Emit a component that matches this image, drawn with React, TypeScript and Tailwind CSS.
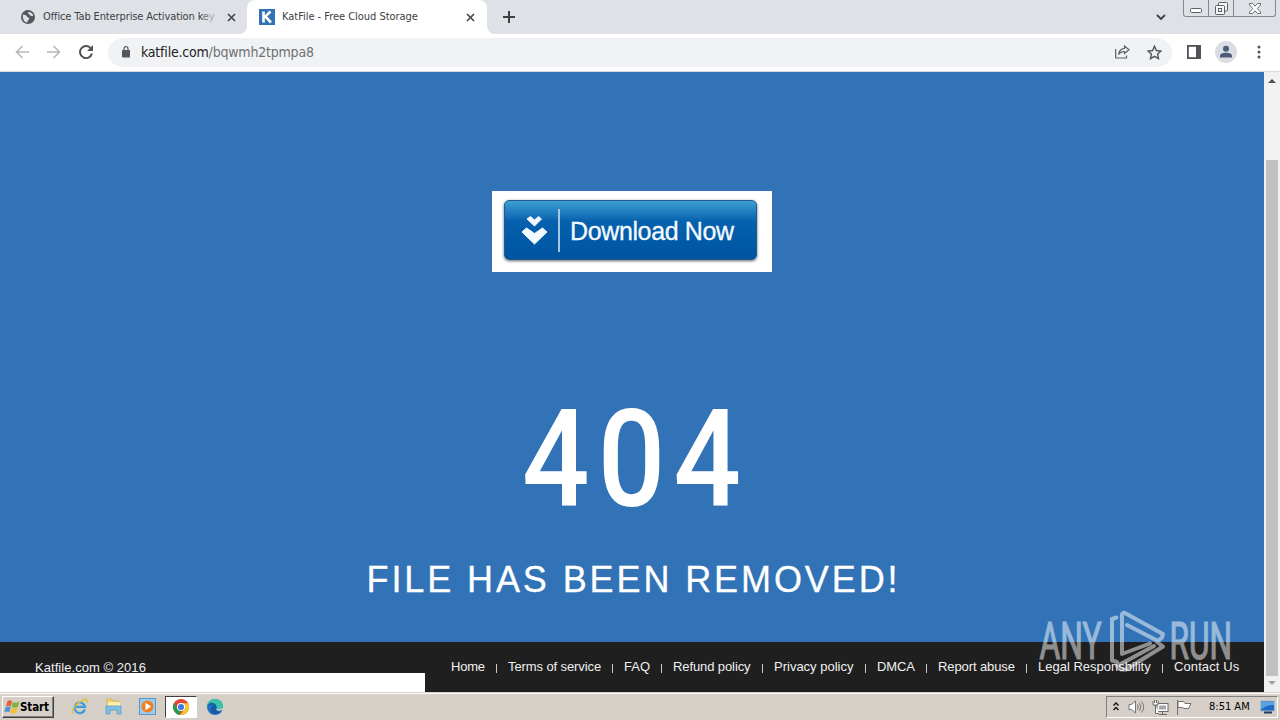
import React from "react";

const FOOTER_LINKS = [
  { label: "Home", w: "w-[34px]", ls: "tracking-[-0.2px]" },
  { label: "Terms of service", w: "w-[93px]", ls: "tracking-[-0.1px]" },
  { label: "FAQ", w: "w-[26px]", ls: "tracking-[0px]" },
  { label: "Refund policy", w: "w-[78px]", ls: "tracking-[-0.1px]" },
  { label: "Privacy policy", w: "w-[80px]", ls: "tracking-[0px]" },
  { label: "DMCA", w: "w-[38px]", ls: "tracking-[-0.1px]" },
  { label: "Report abuse", w: "w-[77px]", ls: "tracking-[-0.1px]" },
  { label: "Legal Responsbility", w: "w-[113px]", ls: "tracking-[0px]" },
  { label: "Contact Us", w: "w-[65px]", ls: "tracking-[0.1px]" },
];

function Cross() {
  return (
    <svg width="9" height="9" viewBox="0 0 9 9" className="shrink-0">
      <path d="M1 1L8 8M8 1L1 8" stroke="#45484c" strokeWidth="1.7" />
    </svg>
  );
}

function TabStrip() {
  return (
    <div className="flex h-[34px] bg-white text-[11px] text-[#3c4043]">
      <div className="flex h-[34px] w-[247px] items-center rounded-br-lg bg-[#dee1e6] pl-[21px]">
        <svg width="14" height="14" viewBox="0 0 14 14" className="shrink-0">
          <circle cx="7" cy="7" r="7" fill="#54585d" />
          <path d="M2 4.5C3.5 5 5 4.5 5.5 6C6 7.5 8 7 8.2 8.5C8.3 10 6.5 10 6.3 12.4C3 12 1.4 9 2 4.500Z" fill="#dee1e6" />
          <path d="M7 2C9 1.500 11.500 3 12.300 5.500C11 6.500 9.500 6 9 5C8 4.500 7 3.500 7 2Z" fill="#dee1e6" />
        </svg>
        <span className="ml-[8px] w-[176px] whitespace-nowrap pt-[1px] tracking-[-0.12px]">
          Office Tab Enterprise Activation k<span className="text-[#74787e]">e</span><span className="text-[#a5a9ae]">y</span>
        </span>
        <span className="ml-[8px] flex"><Cross /></span>
      </div>
      <div className="w-[240px] bg-[#dee1e6]">
        <div className="flex h-[34px] items-center rounded-t-lg bg-white pl-[12px]">
          <svg width="16" height="16" viewBox="0 0 16 16" className="shrink-0">
            <rect width="16" height="16" fill="#3173b6" />
            <path d="M4.500 2.500V13.500M11.500 2.500L6.300 7.500L12 13.500" stroke="#fff" strokeWidth="2.600" fill="none" />
          </svg>
          <span className="ml-[7px] w-[177px] whitespace-nowrap pt-[1px] tracking-[-0.03px]">KatFile - Free Cloud Storage</span>
          <span className="ml-[7px] flex"><Cross /></span>
        </div>
      </div>
      <div className="flex flex-1 items-center rounded-bl-lg bg-[#dee1e6] pl-[16px]">
        <svg width="12" height="12" viewBox="0 0 12 12">
          <path d="M6 0V12M0 6H12" stroke="#3c4043" strokeWidth="2" />
        </svg>
        <svg className="ml-auto" width="10" height="7" viewBox="0 0 10 7">
          <path d="M1 1L5 5L9 1" fill="none" stroke="#3c4043" strokeWidth="1.800" />
        </svg>
        <div className="ml-[17px] mr-[4px] flex h-[17px] w-[93px] self-start rounded-b-[3px] border border-t-0 border-[#85888e]">
          <div className="flex w-[25px] items-end justify-center border-r border-[#85888e] pb-[3px]">
            <svg width="12" height="5" viewBox="0 0 12 5"><rect x=".5" y=".5" width="11" height="4" rx="1" fill="#fff" stroke="#5c5f65" /></svg>
          </div>
          <div className="flex w-[25px] items-end justify-center border-r border-[#85888e] pb-[1px]">
            <svg width="13" height="13" viewBox="0 0 13 13" fill="#f4f5f7" stroke="#5c5f65">
              <rect x="3.500" y=".5" width="9" height="8.500" rx="1" />
              <rect x=".5" y="3.500" width="9" height="9" rx="1" />
              <rect x="3.500" y="6.500" width="3" height="3" />
            </svg>
          </div>
          <div className="flex flex-1 items-end justify-center pb-[2px]">
            <svg width="12" height="11" viewBox="0 0 12 11">
              <path d="M.5.5H3.500L6 3.200L8.500.5H11.500V2L8.300 5.500L11.500 9V10.500H8.500L6 7.800L3.500 10.500H.5V9L3.700 5.500L.5 2Z" fill="#fff" stroke="#5c5f65" strokeWidth=".9" />
            </svg>
          </div>
        </div>
      </div>
    </div>
  );
}

function Toolbar() {
  return (
    <div className="flex h-[38px] items-center border-b border-[#d5dbe2] bg-white pb-[1px] pl-[15px]">
      <svg width="14" height="14" viewBox="0 0 14 14"><path d="M14 7H1.500M7.500 1L1.500 7L7.500 13" fill="none" stroke="#b5b7ba" strokeWidth="1.600" /></svg>
      <svg className="ml-[18px]" width="14" height="14" viewBox="0 0 14 14"><path d="M0 7H12.500M6.500 1L12.500 7L6.500 13" fill="none" stroke="#b5b7ba" strokeWidth="1.600" /></svg>
      <svg className="ml-[18px]" width="14" height="14" viewBox="0 0 14 14">
        <path d="M12 3.700A6 6 0 1 0 12.900 8.500" fill="none" stroke="#505357" strokeWidth="2" />
        <path d="M14 0V6H8Z" fill="#505357" />
      </svg>
      <div className="ml-[15px] flex h-[29px] w-[1064px] items-center rounded-full bg-[#f0f2f4] pl-[14px]">
        <svg width="8" height="12" viewBox="0 0 8 12"><rect y="4" width="8" height="7.500" rx="1" fill="#54575b" /><path d="M2 4.500V2.700A2 2 0 0 1 6 2.700V4.500" fill="none" stroke="#54575b" strokeWidth="1.200" /></svg>
        <span className="ml-[11px] whitespace-nowrap pt-[1px] text-[14px] tracking-[-0.2px] text-[#202124]">katfile.com<span className="text-[#6d7175]">/bqwmh2tpmpa8</span></span>
        <svg className="ml-auto" width="15" height="14" viewBox="0 0 15 14" fill="none" stroke="#5c5f63" strokeWidth="1.200">
          <path d="M.7 4V13H11.500V10.500" />
          <path d="M9.500 1L14 4.800L9.500 8.500V6.500C6.500 6.500 5 7.300 3.500 9.500C4 5.800 6 3.800 9.500 3.300Z" />
        </svg>
        <svg className="ml-[17px] mr-[10px]" width="15" height="15" viewBox="0 0 15 15"><path d="M7.500 1.300L9.400 5.500L14 6L10.600 9.100L11.500 13.600L7.500 11.300L3.500 13.600L4.400 9.100L1 6L5.600 5.500Z" fill="none" stroke="#505357" strokeWidth="1.400" /></svg>
      </div>
      <svg className="ml-[15px]" width="14" height="14" viewBox="0 0 14 14"><rect x=".9" y=".9" width="12.200" height="12.200" fill="none" stroke="#505357" strokeWidth="1.800" /><rect x="9" width="5" height="14" fill="#505357" /></svg>
      <svg className="ml-[14px]" width="22" height="22" viewBox="0 0 22 22"><circle cx="11" cy="11" r="11" fill="#dadee3" /><circle cx="11" cy="7.800" r="3" fill="#4d5a7a" /><path d="M5 16.500V15C5 12.500 8.500 11.800 11 11.800S17 12.500 17 15V16.500Z" fill="#4d5a7a" /></svg>
      <svg className="ml-[20px]" width="4" height="14" viewBox="0 0 4 14" fill="#505357"><circle cx="2" cy="2" r="1.500" /><circle cx="2" cy="7" r="1.500" /><circle cx="2" cy="12" r="1.500" /></svg>
    </div>
  );
}

function DownloadButton() {
  return (
    <div className="flex h-[81px] w-[280px] items-start bg-white pl-[12px] pt-[9px]">
      <div className="flex h-[60px] w-[253px] items-center rounded-[5px] border border-[#1c5b8c] bg-linear-to-b from-[#3c9fd3] via-[#0561ad] via-35% to-[#0054a2] pl-[16px] shadow-[0_1px_3px_#5c6670]">
        <svg width="28" height="30" viewBox="0 0 28 30" fill="#f3faff" stroke="#f3faff" strokeLinejoin="round">
          <path d="M9.500 1.500L13.500 5L17.500 1.500L20.500 4L13.500 11L6 4Z" />
          <path d="M5.500 13L13.500 18.500L21.500 13L26 17L13.500 29L1 17Z" />
        </svg>
        <div className="ml-[9px] h-[43px] w-[2px] bg-[#a4c7e4]" />
        <span className="ml-[10px] mt-[2px] whitespace-nowrap text-[25px] leading-[30px] tracking-[-0.37px] text-[#f3faff] [-webkit-text-stroke:0.3px_#f3faff]">Download Now</span>
      </div>
    </div>
  );
}

function Watermark() {
  return (
    <svg className="absolute left-[1032px] top-[532px] overflow-visible" width="206" height="74" viewBox="-4 -4 206 74" opacity=".5">
      <g fill="#fff" stroke="#fff" strokeWidth="1.200" fontFamily="Roboto, sans-serif" fontSize="51">
        <text transform="translate(3.500 51) scale(.62 1)" x="0" y="0" textLength="100" lengthAdjust="spacingAndGlyphs">ANY</text>
        <text transform="translate(133.500 51) scale(.62 1)" x="0" y="0" textLength="101" lengthAdjust="spacingAndGlyphs">RUN</text>
      </g>
      <g fill="none" stroke="#fff" strokeWidth="4" strokeLinejoin="round" strokeLinecap="round">
        <path d="M80.500 9.500L76 11V52.500L81 54" />
        <path d="M91 17L122 33L126 29.500L127 26L88 4.500L86 6V46L114 35.500" />
        <path d="M118 38L81 58L85 61.500H90L127 38.500L121 34" />
      </g>
    </svg>
  );
}

function Page() {
  return (
    <div className="relative flex h-[620px]">
      <div className="flex w-[1264px] flex-col bg-[#3173b6]">
        <div className="flex h-[570px] flex-col items-center pt-[119px] text-white">
          <DownloadButton />
          <h1 className="mt-[108px] h-[160px] scale-x-[0.88] pl-[8px] font-['Roboto'] text-[135px] leading-[160px] font-medium tracking-[9.3px]">404</h1>
          <p className="mt-[18px] whitespace-nowrap pl-[3px] text-[36px] leading-[44px] tracking-[2.9px] [-webkit-text-stroke:0.3px_#fff]">FILE HAS BEEN REMOVED!</p>
        </div>
        <footer className="flex h-[50px] bg-[#1f1f1f] text-[13px] leading-[16px] text-[#f0f0f0]">
          <span className="ml-[35px] mt-[18px] w-[416px] whitespace-nowrap tracking-[0.05px]">Katfile.com © 2016</span>
          <nav className="mt-[17px] flex h-[16px]">
            {FOOTER_LINKS.map((l, i) => (
              <React.Fragment key={l.label}>
                {i > 0 && <span className="mx-[11px] mt-[5px] h-[9px] w-px bg-[#c8c8c8]" />}
                <a className={`whitespace-nowrap ${l.w} ${l.ls}`}>{l.label}</a>
              </React.Fragment>
            ))}
          </nav>
        </footer>
      </div>
      <div className="flex w-4 flex-col items-center bg-[#f1f1f1]">
        <svg className="mt-[7px]" width="8" height="4" viewBox="0 0 8 4"><path d="M0 4L4 0L8 4Z" fill="#505050" /></svg>
        <div className="mt-[77px] h-[516px] w-3 bg-[#c1c1c1]" />
        <svg className="mt-[5px]" width="8" height="4" viewBox="0 0 8 4"><path d="M0 0L4 4L8 0Z" fill="#a3a3a3" /></svg>
      </div>
      <div className="absolute bottom-0 left-0 h-[19px] w-[425px] bg-white" />
      <Watermark />
    </div>
  );
}

function Taskbar() {
  return (
    <div className="flex h-[28px] items-start border-t border-[#d4d0c8] bg-[#d5cfc7] text-black shadow-[inset_0_1px_0_#fff]">
      <button className="ml-[2px] mt-[3px] flex h-[22px] w-[52px] items-center border border-t-white border-r-[#404040] border-b-[#404040] border-l-white pl-[1px] shadow-[inset_-1px_-1px_0_#808080]">
        <svg className="shrink-0" width="16" height="16" viewBox="0 0 16 16">
          <path d="M3.500 2C5.500.8 7 1.500 8.200 2.500L6.800 7.500C5.500 6.500 3.500 6.500 2 7.200Z" fill="#e7603c" />
          <path d="M9 3C11 4 13 4 15.500 2.500L14 7.800C12 9 9.500 9 7.600 7.900Z" fill="#7db543" />
          <path d="M1.800 8C3.500 7.300 5.200 7.300 6.600 8.300L5.200 13.300C4 12.300 2 12.200.3 13Z" fill="#4a91d5" />
          <path d="M7.400 8.700C9.500 9.700 12 9.600 13.800 8.600L12.300 13.800C10 15 7.800 14.700 6 13.700Z" fill="#f2bf38" />
        </svg>
        <span className="whitespace-nowrap pt-[1px] font-['DejaVu_Sans_Condensed','DejaVu_Sans',sans-serif] text-[11.5px] font-bold tracking-[-0.1px]">Start</span>
      </button>
      <svg className="ml-[17px] mt-[5px]" width="17" height="17" viewBox="0 0 17 17" fill="none">
        <path d="M13.800 11.500A5.300 5.300 0 1 1 14 8.800H4.500" stroke="#3c9ddd" strokeWidth="2.300" />
        <path d="M2 15.500C-.5 13 5 5 12 2C16 .3 17 2 15.500 5" stroke="#e9bd37" strokeWidth="1.400" />
      </svg>
      <svg className="ml-[17px] mt-[5px]" width="17" height="17" viewBox="0 0 17 17">
        <path d="M2 1H7L8 3H14V12H2Z" fill="#ecd071" stroke="#d5ad48" strokeWidth=".7" />
        <path d="M3 4H15V9H3Z" fill="#faeeaa" />
        <path d="M1 8H16V16H12V12H5V16H1Z" fill="#80bee6" stroke="#5698c7" strokeWidth=".7" />
      </svg>
      <svg className="ml-[17px] mt-[5px]" width="17" height="17" viewBox="0 0 17 17">
        <rect x=".5" y=".5" width="16" height="16" fill="#9fcaea" stroke="#5698cd" />
        <circle cx="8.500" cy="8.500" r="6" fill="#ef8022" /><path d="M6.500 4.800L12 8.500L6.500 12.200Z" fill="#fff" />
      </svg>
      <div className="ml-[9px] mt-[3px] flex h-[22px] w-[32px] items-center justify-center border border-t-[#404040] border-r-white border-b-white border-l-[#404040] bg-white">
        <svg width="16" height="16" viewBox="0 0 16 16">
          <circle cx="8" cy="8" r="8" fill="#dd4936" />
          <path d="M1.070 4L4.540 10L8 12L4.540 15.200A8 8 0 0 1 1.070 4Z" fill="#249a52" />
          <path d="M4 9L8 11.500L6.500 15.850A8 8 0 0 1 3 14.200Z" fill="#249a52" />
          <path d="M8 4.300H15.070A8 8 0 0 1 7 15.950L11.500 10Z" fill="#f8c52d" />
          <circle cx="8" cy="8" r="4" fill="#fff" /><circle cx="8" cy="8" r="3.100" fill="#3e7de8" />
        </svg>
      </div>
      <svg className="ml-[10px] mt-[6px]" width="16" height="16" viewBox="0 0 16 16">
        <circle cx="8" cy="8" r="8" fill="#1b72c2" />
        <path d="M0 8C0 3 3.500 0 8 0S16 3 16 7C16 10 12 11.500 9.500 10C11 8.500 9.500 6 6.500 5.500C3.500 5 1 6 0 8Z" fill="#39c5ab" />
        <path d="M0 8C.5 5.500 3 3 6 4C9 5 10 6.500 9 9C8 11 10 13 14.500 12C12 16 6 15.500 4.500 13C3 10 5 7 7 6C3 5 1 6.500 0 8Z" fill="#175aa7" />
        <path d="M9.500 9.500C9 12 12 12.500 16 10.500V8.500C14 10.700 11.500 10.500 9.500 9.500Z" fill="#d5cfc7" />
      </svg>
      <div className="ml-auto mr-[2px] mt-[3px] flex h-[22px] w-[172px] items-center border border-t-[#808080] border-r-white border-b-white border-l-[#808080] pl-[6px]">
        <svg className="mb-[2px] shrink-0" width="6" height="9" viewBox="0 0 6 9" fill="none" stroke="#111" strokeWidth="1.400"><path d="M.5 3.500L3 1L5.500 3.500M.5 8L3 5.500L5.500 8" /></svg>
        <svg className="ml-[9px] shrink-0" width="17" height="14" viewBox="0 0 17 14" fill="none" stroke="#77777a">
          <path d="M1 4.500H3.500L7.500 1V13L3.500 9.500H1Z" fill="#fff" /><path d="M9.500 4.500Q11 7 9.500 9.500M11.500 3Q14 7 11.500 11M13.500 1.500Q18 7 13.500 12.500" />
        </svg>
        <svg className="ml-[7px] shrink-0" width="17" height="15" viewBox="0 0 17 15" fill="none" stroke="#68686b">
          <rect x="5" y="3.500" width="11" height="8" fill="#fff" /><rect x="7" y="5.500" width="7" height="4" fill="#a6a6a6" stroke="none" /><path d="M7 14.500H15M10.500 12V14" />
          <path d="M1 1V5H6V1M2.500 0V3M4.500 0V3M3.500 5V13.500H7" fill="#fff" />
        </svg>
        <svg className="ml-[7px] shrink-0" width="16" height="15" viewBox="0 0 16 15" fill="#fff" stroke="#737376"><path d="M1.500 0V15" /><path d="M2 1.500H7.500L9 3.500H15L12.500 8.500H8L6.500 7.500H2Z" /></svg>
        <span className="ml-[17px] w-[41px] shrink-0 whitespace-nowrap pt-[1px] font-['DejaVu_Sans_Condensed','DejaVu_Sans',sans-serif] text-[11px] tracking-[0px]">8:51 AM</span>
        <svg className="ml-[10px] shrink-0" width="15" height="14" viewBox="0 0 15 14"><rect x=".5" y="1" width="14" height="10" fill="#1f69c0" stroke="#a7b9ce" /><path d="M1 2H14V5Q6 5 2 9H1Z" fill="#5ba2e2" /><path d="M4 12.500H12" stroke="#1e3c64" strokeWidth="2" /></svg>
      </div>
    </div>
  );
}

export default function App() {
  return (
    <div className="h-[720px] w-[1280px] overflow-hidden font-['Liberation_Sans',Arial,sans-serif]">
      <div className="font-['DejaVu_Sans_Condensed','DejaVu_Sans',sans-serif]">
        <TabStrip />
        <Toolbar />
      </div>
      <Page />
      <Taskbar />
    </div>
  );
}
